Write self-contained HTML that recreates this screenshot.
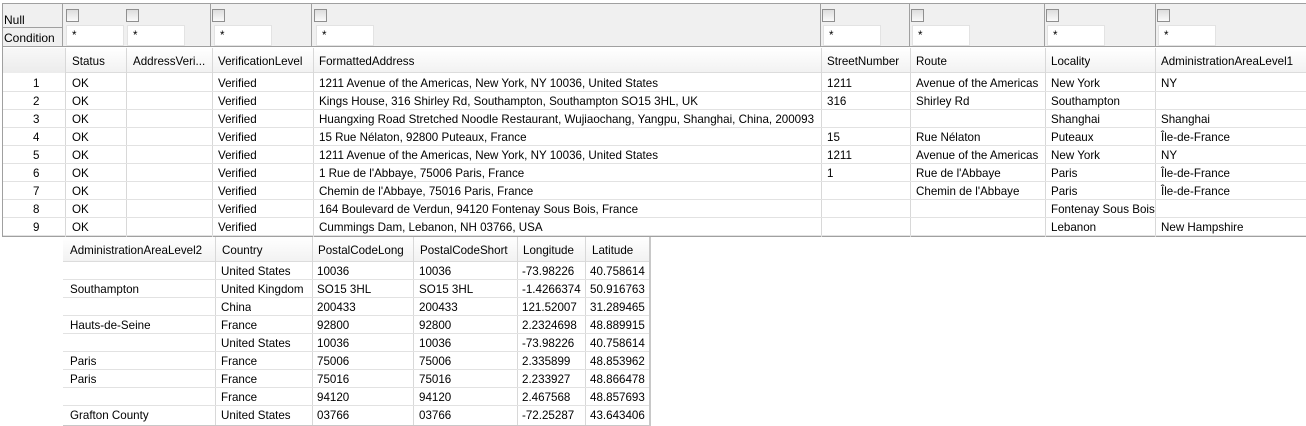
<!DOCTYPE html><html><head><style>
body{margin:0;width:1306px;height:426px;background:#fff;font-family:"Liberation Sans",sans-serif;font-size:11.6px;color:#000;position:relative;overflow:hidden}
div{position:absolute;box-sizing:border-box}
.t{white-space:nowrap;line-height:19px;padding-left:5px;overflow:hidden}
.cb{width:13px;height:13px;border:1px solid #8f8f8f;background:linear-gradient(#ddd,#fafafa);top:9px}
.in{height:21px;width:58px;top:25px;background:#fff;border:1px solid #e3e3e3;padding-left:5px;line-height:19px}
.vl{width:1px;background:#d8d8d8}
.hl{height:1px;background:#e2e2e2}
</style></head><body>
<div style="left:2px;top:3px;width:1304px;height:234px;border:1px solid #a0a0a0;border-right:none;background:#fff"></div>
<div style="left:3px;top:4px;width:1303px;height:43px;background:#f0f0f0;border-bottom:1px solid #a0a0a0"></div>
<div style="left:3px;top:4px;width:60px;height:43px;border-right:1px solid #a0a0a0"></div>
<div style="left:3px;top:27px;width:60px;height:1px;background:#a0a0a0"></div>
<div class="t" style="left:0;top:11px;padding-left:4px;font-size:12px">Null</div>
<div class="t" style="left:0;top:29px;padding-left:4px;font-size:12px">Condition</div>
<div class="vl" style="left:210px;top:4px;height:43px;background:#a0a0a0"></div>
<div class="vl" style="left:311px;top:4px;height:43px;background:#a0a0a0"></div>
<div class="vl" style="left:820px;top:4px;height:43px;background:#a0a0a0"></div>
<div class="vl" style="left:909px;top:4px;height:43px;background:#a0a0a0"></div>
<div class="vl" style="left:1044px;top:4px;height:43px;background:#a0a0a0"></div>
<div class="vl" style="left:1155px;top:4px;height:43px;background:#a0a0a0"></div>
<div class="cb" style="left:66px"></div><div class="in" style="left:66px">*</div>
<div class="cb" style="left:126px"></div><div class="in" style="left:127px">*</div>
<div class="cb" style="left:212px"></div><div class="in" style="left:214px">*</div>
<div class="cb" style="left:314px"></div><div class="in" style="left:316px">*</div>
<div class="cb" style="left:822px"></div><div class="in" style="left:823px">*</div>
<div class="cb" style="left:911px"></div><div class="in" style="left:912px">*</div>
<div class="cb" style="left:1046px"></div><div class="in" style="left:1047px">*</div>
<div class="cb" style="left:1157px"></div><div class="in" style="left:1158px">*</div>
<div style="left:3px;top:48px;width:1303px;height:25px;background:linear-gradient(#fff,#f2f2f2);border-bottom:1px solid #dcdcdc"></div>
<div style="left:3px;top:48px;width:62px;height:25px;background:linear-gradient(#f8f8f8,#ececec)"></div>
<div class="vl" style="left:65px;top:48px;height:189px"></div>
<div class="vl" style="left:126px;top:48px;height:189px"></div>
<div class="vl" style="left:212px;top:48px;height:189px"></div>
<div class="vl" style="left:313px;top:48px;height:189px"></div>
<div class="vl" style="left:821px;top:48px;height:189px"></div>
<div class="vl" style="left:910px;top:48px;height:189px"></div>
<div class="vl" style="left:1045px;top:48px;height:189px"></div>
<div class="vl" style="left:1155px;top:48px;height:189px"></div>
<div class="t" style="left:67px;top:52px">Status</div>
<div class="t" style="left:128px;top:52px;width:84px">AddressVeri...</div>
<div class="t" style="left:213px;top:52px">VerificationLevel</div>
<div class="t" style="left:314px;top:52px">FormattedAddress</div>
<div class="t" style="left:822px;top:52px">StreetNumber</div>
<div class="t" style="left:911px;top:52px">Route</div>
<div class="t" style="left:1046px;top:52px">Locality</div>
<div class="t" style="left:1156px;top:52px">AdministrationAreaLevel1</div>
<div class="hl" style="left:3px;top:91px;width:1303px"></div>
<div class="hl" style="left:3px;top:109px;width:1303px"></div>
<div class="hl" style="left:3px;top:127px;width:1303px"></div>
<div class="hl" style="left:3px;top:145px;width:1303px"></div>
<div class="hl" style="left:3px;top:163px;width:1303px"></div>
<div class="hl" style="left:3px;top:181px;width:1303px"></div>
<div class="hl" style="left:3px;top:199px;width:1303px"></div>
<div class="hl" style="left:3px;top:217px;width:1303px"></div>
<div class="hl" style="left:3px;top:235px;width:1303px"></div>
<div style="left:0;top:74px;width:1306px">
<div class="t" style="left:28px;top:0">1</div><div class="t" style="left:67px;top:0">OK</div><div class="t" style="left:213px;top:0">Verified</div><div class="t" style="left:314px;top:0">1211 Avenue of the Americas, New York, NY 10036, United States</div><div class="t" style="left:822px;top:0">1211</div><div class="t" style="left:911px;top:0;width:134px">Avenue of the Americas</div><div class="t" style="left:1046px;top:0">New York</div><div class="t" style="left:1156px;top:0">NY</div>
<div class="t" style="left:28px;top:18px">2</div><div class="t" style="left:67px;top:18px">OK</div><div class="t" style="left:213px;top:18px">Verified</div><div class="t" style="left:314px;top:18px">Kings House, 316 Shirley Rd, Southampton, Southampton SO15 3HL, UK</div><div class="t" style="left:822px;top:18px">316</div><div class="t" style="left:911px;top:18px">Shirley Rd</div><div class="t" style="left:1046px;top:18px">Southampton</div>
<div class="t" style="left:28px;top:36px">3</div><div class="t" style="left:67px;top:36px">OK</div><div class="t" style="left:213px;top:36px">Verified</div><div class="t" style="left:314px;top:36px;width:507px">Huangxing Road Stretched Noodle Restaurant, Wujiaochang, Yangpu, Shanghai, China, 200093</div><div class="t" style="left:1046px;top:36px">Shanghai</div><div class="t" style="left:1156px;top:36px">Shanghai</div>
<div class="t" style="left:28px;top:54px">4</div><div class="t" style="left:67px;top:54px">OK</div><div class="t" style="left:213px;top:54px">Verified</div><div class="t" style="left:314px;top:54px">15 Rue Nélaton, 92800 Puteaux, France</div><div class="t" style="left:822px;top:54px">15</div><div class="t" style="left:911px;top:54px">Rue Nélaton</div><div class="t" style="left:1046px;top:54px">Puteaux</div><div class="t" style="left:1156px;top:54px">Île-de-France</div>
<div class="t" style="left:28px;top:72px">5</div><div class="t" style="left:67px;top:72px">OK</div><div class="t" style="left:213px;top:72px">Verified</div><div class="t" style="left:314px;top:72px">1211 Avenue of the Americas, New York, NY 10036, United States</div><div class="t" style="left:822px;top:72px">1211</div><div class="t" style="left:911px;top:72px;width:134px">Avenue of the Americas</div><div class="t" style="left:1046px;top:72px">New York</div><div class="t" style="left:1156px;top:72px">NY</div>
<div class="t" style="left:28px;top:90px">6</div><div class="t" style="left:67px;top:90px">OK</div><div class="t" style="left:213px;top:90px">Verified</div><div class="t" style="left:314px;top:90px">1 Rue de l'Abbaye, 75006 Paris, France</div><div class="t" style="left:822px;top:90px">1</div><div class="t" style="left:911px;top:90px">Rue de l'Abbaye</div><div class="t" style="left:1046px;top:90px">Paris</div><div class="t" style="left:1156px;top:90px">Île-de-France</div>
<div class="t" style="left:28px;top:108px">7</div><div class="t" style="left:67px;top:108px">OK</div><div class="t" style="left:213px;top:108px">Verified</div><div class="t" style="left:314px;top:108px">Chemin de l'Abbaye, 75016 Paris, France</div><div class="t" style="left:911px;top:108px">Chemin de l'Abbaye</div><div class="t" style="left:1046px;top:108px">Paris</div><div class="t" style="left:1156px;top:108px">Île-de-France</div>
<div class="t" style="left:28px;top:126px">8</div><div class="t" style="left:67px;top:126px">OK</div><div class="t" style="left:213px;top:126px">Verified</div><div class="t" style="left:314px;top:126px">164 Boulevard de Verdun, 94120 Fontenay Sous Bois, France</div><div class="t" style="left:1046px;top:126px;width:109px">Fontenay Sous Bois</div>
<div class="t" style="left:28px;top:144px">9</div><div class="t" style="left:67px;top:144px">OK</div><div class="t" style="left:213px;top:144px">Verified</div><div class="t" style="left:314px;top:144px">Cummings Dam, Lebanon, NH 03766, USA</div><div class="t" style="left:1046px;top:144px">Lebanon</div><div class="t" style="left:1156px;top:144px">New Hampshire</div>
</div>
<div style="left:63px;top:237px;width:588px;height:189px;background:#fff;border-right:2px solid #c8c8c8;border-bottom:1px solid #c8c8c8"></div>
<div style="left:63px;top:237px;width:586px;height:25px;background:linear-gradient(#fff,#f2f2f2);border-bottom:1px solid #dcdcdc"></div>
<div class="vl" style="left:215px;top:237px;height:188px"></div>
<div class="vl" style="left:312px;top:237px;height:188px"></div>
<div class="vl" style="left:413px;top:237px;height:188px"></div>
<div class="vl" style="left:517px;top:237px;height:188px"></div>
<div class="vl" style="left:585px;top:237px;height:188px"></div>
<div class="t" style="left:65px;top:241px;width:150px">AdministrationAreaLevel2</div>
<div class="t" style="left:217px;top:241px">Country</div>
<div class="t" style="left:313px;top:241px">PostalCodeLong</div>
<div class="t" style="left:415px;top:241px">PostalCodeShort</div>
<div class="t" style="left:518px;top:241px">Longitude</div>
<div class="t" style="left:587px;top:241px">Latitude</div>
<div class="hl" style="left:63px;top:279px;width:586px"></div>
<div class="hl" style="left:63px;top:297px;width:586px"></div>
<div class="hl" style="left:63px;top:315px;width:586px"></div>
<div class="hl" style="left:63px;top:333px;width:586px"></div>
<div class="hl" style="left:63px;top:351px;width:586px"></div>
<div class="hl" style="left:63px;top:369px;width:586px"></div>
<div class="hl" style="left:63px;top:387px;width:586px"></div>
<div class="hl" style="left:63px;top:405px;width:586px"></div>
<div style="left:0;top:262px;width:700px">
<div class="t" style="left:216px;top:0">United States</div><div class="t" style="left:312px;top:0">10036</div><div class="t" style="left:414px;top:0">10036</div><div class="t" style="left:517px;top:0">-73.98226</div><div class="t" style="left:585px;top:0">40.758614</div>
<div class="t" style="left:65px;top:18px">Southampton</div><div class="t" style="left:216px;top:18px;width:96px">United Kingdom</div><div class="t" style="left:312px;top:18px">SO15 3HL</div><div class="t" style="left:414px;top:18px">SO15 3HL</div><div class="t" style="left:517px;top:18px;width:68px">-1.4266374</div><div class="t" style="left:585px;top:18px">50.916763</div>
<div class="t" style="left:216px;top:36px">China</div><div class="t" style="left:312px;top:36px">200433</div><div class="t" style="left:414px;top:36px">200433</div><div class="t" style="left:517px;top:36px">121.52007</div><div class="t" style="left:585px;top:36px">31.289465</div>
<div class="t" style="left:65px;top:54px">Hauts-de-Seine</div><div class="t" style="left:216px;top:54px">France</div><div class="t" style="left:312px;top:54px">92800</div><div class="t" style="left:414px;top:54px">92800</div><div class="t" style="left:517px;top:54px">2.2324698</div><div class="t" style="left:585px;top:54px">48.889915</div>
<div class="t" style="left:216px;top:72px">United States</div><div class="t" style="left:312px;top:72px">10036</div><div class="t" style="left:414px;top:72px">10036</div><div class="t" style="left:517px;top:72px">-73.98226</div><div class="t" style="left:585px;top:72px">40.758614</div>
<div class="t" style="left:65px;top:90px">Paris</div><div class="t" style="left:216px;top:90px">France</div><div class="t" style="left:312px;top:90px">75006</div><div class="t" style="left:414px;top:90px">75006</div><div class="t" style="left:517px;top:90px">2.335899</div><div class="t" style="left:585px;top:90px">48.853962</div>
<div class="t" style="left:65px;top:108px">Paris</div><div class="t" style="left:216px;top:108px">France</div><div class="t" style="left:312px;top:108px">75016</div><div class="t" style="left:414px;top:108px">75016</div><div class="t" style="left:517px;top:108px">2.233927</div><div class="t" style="left:585px;top:108px">48.866478</div>
<div class="t" style="left:216px;top:126px">France</div><div class="t" style="left:312px;top:126px">94120</div><div class="t" style="left:414px;top:126px">94120</div><div class="t" style="left:517px;top:126px">2.467568</div><div class="t" style="left:585px;top:126px">48.857693</div>
<div class="t" style="left:65px;top:144px">Grafton County</div><div class="t" style="left:216px;top:144px">United States</div><div class="t" style="left:312px;top:144px">03766</div><div class="t" style="left:414px;top:144px">03766</div><div class="t" style="left:517px;top:144px">-72.25287</div><div class="t" style="left:585px;top:144px">43.643406</div>
</div>
</body></html>
